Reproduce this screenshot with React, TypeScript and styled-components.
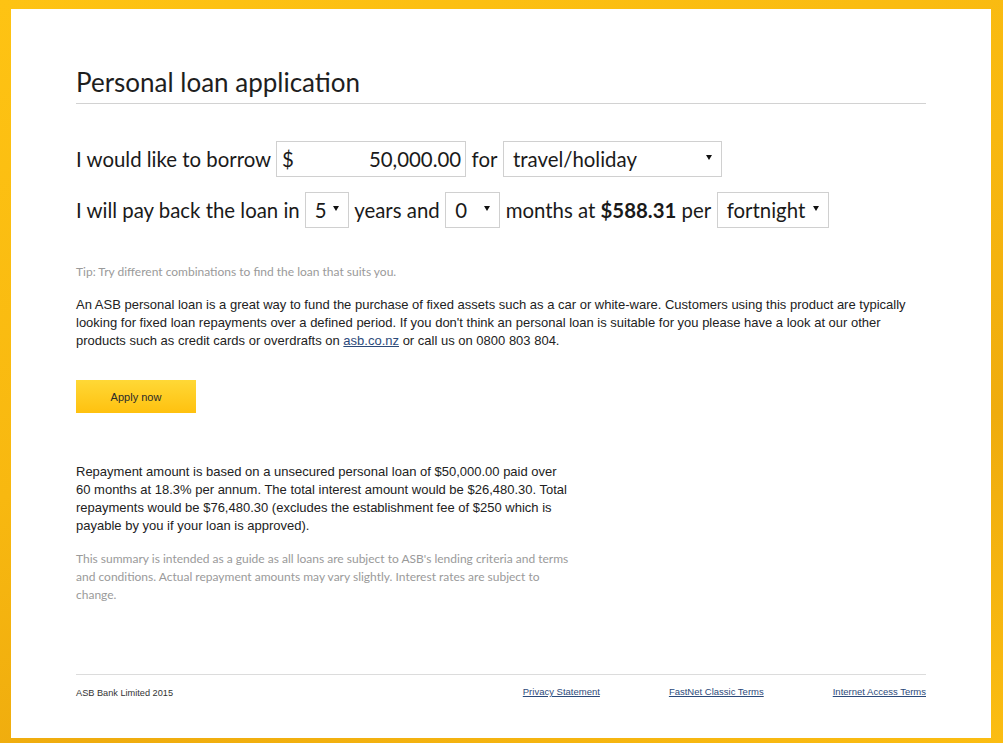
import React from "react";
import styled, { createGlobalStyle } from "styled-components";

const Global = createGlobalStyle`
  html, body { margin: 0; padding: 0; }
  body {
    width: 1003px;
    height: 743px;
    overflow: hidden;
    background: linear-gradient(160deg, #fec313 0%, #f8b810 45%, #efac0e 70%, #fbbd12 100%);
    font-family: "Liberation Sans", Arial, sans-serif;
  }
`;

const Frame = styled.div`
  padding: 9px 12px 5px 11px;
`;

const Panel = styled.main`
  background: #fff;
  height: 729px;
  box-sizing: border-box;
  padding: 0 65px;
  display: flex;
  flex-direction: column;
`;

const Heading = styled.h1`
  margin: 57px 0 0;
  padding-bottom: 5px;
  border-bottom: 1px solid #d2d2d2;
  font-family: Lato, "Open Sans", sans-serif;
  font-weight: 400;
  font-size: 26px;
  line-height: 32px;
  color: #1e1e1e;
`;

const Form = styled.div`
  margin-top: 37px;
  display: flex;
  flex-direction: column;
  gap: 15px;
`;

const Row = styled.div`
  display: flex;
  align-items: center;
  gap: 5px;
  font-family: Lato, "Open Sans", sans-serif;
  font-size: 20.4px;
  color: #1a1a1a;
  height: 36px;
`;

const Label = styled.span`
  margin: 0 0.5px;
`;

const Strong = styled.b`
  font-weight: 700;
`;

const Field = styled.div<{ $w: number }>`
  box-sizing: border-box;
  width: ${(p) => p.$w}px;
  height: 36px;
  border: 1px solid #d0d0d0;
  display: flex;
  align-items: center;
  justify-content: space-between;
  padding: 0 4px 0 5px;
  background: #fff;
`;

const SelectBox = styled(Field)`
  padding: 0 9px 0 9px;
`;

const Caret = styled.span`
  width: 0;
  height: 0;
  border-left: 3px solid transparent;
  border-right: 3px solid transparent;
  border-top: 5px solid #111;
  margin-top: -3px;
`;

const Tip = styled.p`
  margin: 35px 0 0;
  font-family: Lato, "Open Sans", sans-serif;
  font-size: 12px;
  line-height: 18px;
  color: #9a9a9a;
`;

const Body = styled.p<{ $max?: number; $top?: number }>`
  margin: ${(p) => p.$top ?? 15}px 0 0;
  font-size: 13px;
  line-height: 18px;
  color: #222;
  max-width: ${(p) => (p.$max ? `${p.$max}px` : "none")};
`;

const Link = styled.a`
  color: #2c4a7a;
  text-decoration: underline;
`;

const ApplyButton = styled.button`
  margin-top: 30px;
  width: 120px;
  height: 33px;
  border: none;
  background: linear-gradient(#ffd836, #ffc10f);
  font-family: "Liberation Sans", Arial, sans-serif;
  font-size: 11px;
  color: #2a2a2a;
  cursor: pointer;
  padding: 0;
`;

const Note = styled.p`
  margin: 15px 0 0;
  max-width: 505px;
  font-family: Lato, "Open Sans", sans-serif;
  font-size: 12px;
  line-height: 18px;
  color: #9a9a9a;
`;

const Spacer = styled.div`
  flex: 1;
`;

const Footer = styled.footer`
  border-top: 1px solid #dcdcdc;
  height: 64px;
  display: flex;
  align-items: flex-start;
  justify-content: space-between;
  padding-top: 11px;
  box-sizing: border-box;
  font-size: 9.2px;
  color: #333;
`;

const Copyright = styled.span`
  margin-top: 2px;
`;

const FooterLinks = styled.nav`
  display: flex;
  gap: 69px;
`;

const FooterLink = styled.a`
  color: #2c4a7a;
  text-decoration: underline;
  font-size: 9.5px;
`;

export default function App() {
  return (
    <>
      <Global />
      <Frame>
        <Panel>
          <Heading>Personal loan application</Heading>
          <Form>
            <Row>
              <span>I would like to borrow</span>
              <Field $w={190}>
                <span>$</span>
                <span>50,000.00</span>
              </Field>
              <Label>for</Label>
              <SelectBox $w={219}>
                <span>travel/holiday</span>
                <Caret />
              </SelectBox>
            </Row>
            <Row>
              <span>I will pay back the loan in</span>
              <SelectBox $w={44}>
                <span>5</span>
                <Caret />
              </SelectBox>
              <Label>years and</Label>
              <SelectBox $w={55}>
                <span>0</span>
                <Caret />
              </SelectBox>
              <Label>
                months at <Strong>$588.31</Strong> per
              </Label>
              <SelectBox $w={112}>
                <span>fortnight</span>
                <Caret />
              </SelectBox>
            </Row>
          </Form>
          <Tip>Tip: Try different combinations to find the loan that suits you.</Tip>
          <Body>
            An ASB personal loan is a great way to fund the purchase of fixed assets such as a car or
            white-ware. Customers using this product are typically looking for fixed loan repayments
            over a defined period. If you don't think an personal loan is suitable for you please have a
            look at our other products such as credit cards or overdrafts on <Link href="#">asb.co.nz</Link>{" "}
            or call us on 0800 803 804.
          </Body>
          <div>
            <ApplyButton>Apply now</ApplyButton>
          </div>
          <Body $max={495} $top={50}>
            Repayment amount is based on a unsecured personal loan of $50,000.00 paid over 60 months at
            18.3% per annum. The total interest amount would be $26,480.30. Total repayments would be
            $76,480.30 (excludes the establishment fee of $250 which is payable by you if your loan is
            approved).
          </Body>
          <Note>
            This summary is intended as a guide as all loans are subject to ASB's lending criteria and
            terms and conditions. Actual repayment amounts may vary slightly. Interest rates are subject
            to change.
          </Note>
          <Spacer />
          <Footer>
            <Copyright>ASB Bank Limited 2015</Copyright>
            <FooterLinks>
              <FooterLink href="#">Privacy Statement</FooterLink>
              <FooterLink href="#">FastNet Classic Terms</FooterLink>
              <FooterLink href="#">Internet Access Terms</FooterLink>
            </FooterLinks>
          </Footer>
        </Panel>
      </Frame>
    </>
  );
}
